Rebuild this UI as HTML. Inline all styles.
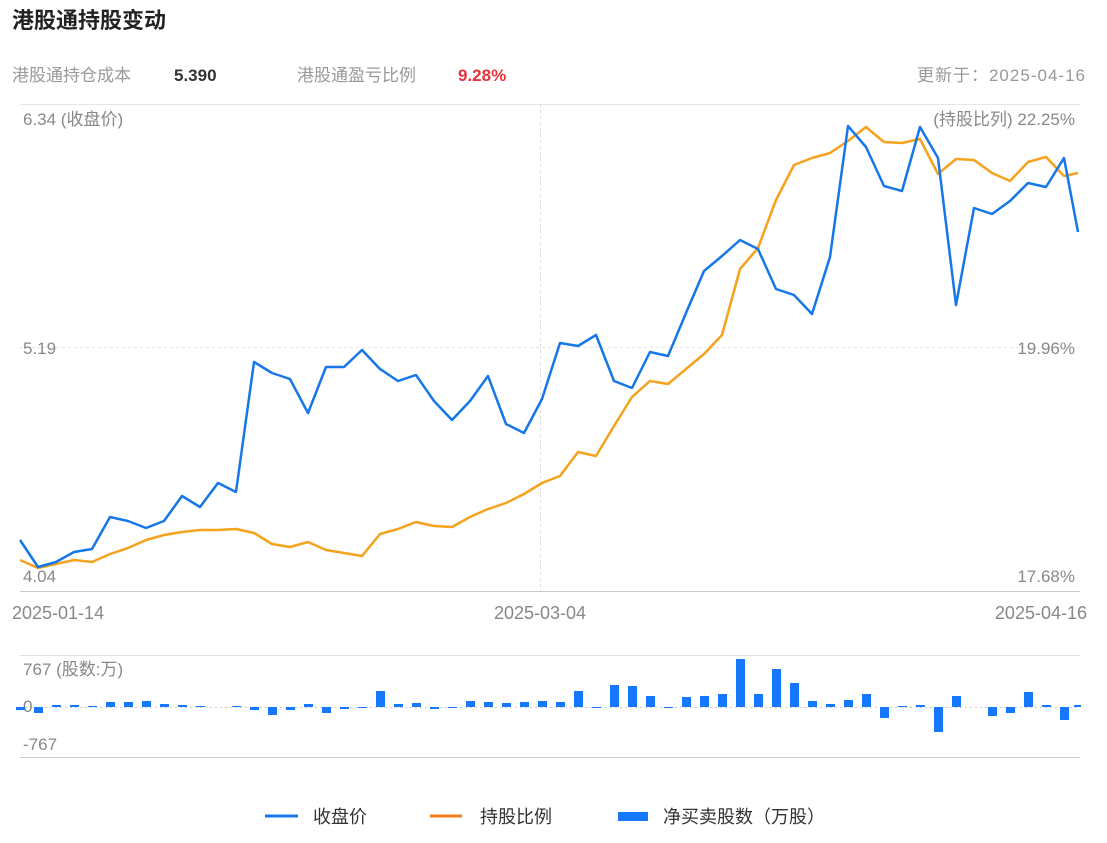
<!DOCTYPE html>
<html><head><meta charset="utf-8"><style>
body{margin:0;background:#fff;width:1107px;height:838px;overflow:hidden;font-family:"Liberation Sans","Noto Sans CJK SC",sans-serif}
svg text{font-family:"Liberation Sans","Noto Sans CJK SC",sans-serif}
</style></head><body>
<svg width="1107" height="838" viewBox="0 0 1107 838" xmlns="http://www.w3.org/2000/svg">
<text x="12" y="28" font-size="22" font-weight="bold" fill="#222">港股通持股变动</text>
<text x="12" y="81" font-size="17" fill="#999">港股通持仓成本</text>
<text x="174" y="81" font-size="17" font-weight="bold" fill="#333">5.390</text>
<text x="297" y="81" font-size="17" fill="#999">港股通盈亏比例</text>
<text x="458" y="81" font-size="17" font-weight="bold" fill="#e8323c">9.28%</text>
<text x="1085" y="81" font-size="17" fill="#999" text-anchor="end" textLength="168">更新于：2025-04-16</text>
<line x1="20" y1="104.5" x2="1080" y2="104.5" stroke="#e6e6e6"/>
<line x1="20" y1="347.5" x2="1080" y2="347.5" stroke="#e6e6e6" stroke-dasharray="3,3"/>
<line x1="540.5" y1="104" x2="540.5" y2="591" stroke="#ddd" stroke-dasharray="3,3"/>
<line x1="20" y1="591.5" x2="1080" y2="591.5" stroke="#ccc"/>
<text x="23" y="125" font-size="17" fill="#888">6.34 (收盘价)</text>
<text x="23" y="354" font-size="17" fill="#888">5.19</text>
<text x="23" y="582" font-size="17" fill="#888">4.04</text>
<text x="1075" y="125" font-size="17" fill="#888" text-anchor="end">(持股比列) 22.25%</text>
<text x="1075" y="354" font-size="17" fill="#888" text-anchor="end">19.96%</text>
<text x="1075" y="582" font-size="17" fill="#888" text-anchor="end">17.68%</text>
<text x="12" y="619" font-size="18" fill="#888">2025-01-14</text>
<text x="540" y="619" font-size="18" fill="#888" text-anchor="middle">2025-03-04</text>
<text x="1087" y="619" font-size="18" fill="#888" text-anchor="end">2025-04-16</text>
<polyline fill="none" stroke="#f5a21c" stroke-width="2.5" stroke-linejoin="round" points="20,560 38,568 56,564 74,560 92,562 110,554 128,548 146,540 164,535 182,532 200,530 218,530 236,529 254,533 272,544 290,547 308,542 326,550 344,553 362,556 380,534 398,529 416,522 434,526 452,527 470,517 488,509 506,503 524,494 542,483 560,476 578,452 596,456 614,426 632,397 650,381 668,384 686,369 704,354 722,335 740,269 758,248 776,200 794,165 812,158 830,153 848,141 866,127 884,142 902,143 920,139 938,174 956,159 974,160 992,173 1010,181 1028,162 1046,157 1064,176 1078,173"/>
<polyline fill="none" stroke="#1677e8" stroke-width="2.5" stroke-linejoin="round" points="20,540 38,567 56,562 74,552 92,549 110,517 128,521 146,528 164,521 182,496 200,507 218,483 236,492 254,362 272,373 290,379 308,413 326,367 344,367 362,350 380,369 398,381 416,375 434,401 452,420 470,401 488,376 506,424 524,433 542,399 560,343 578,346 596,335 614,381 632,388 650,352 668,356 686,313 704,271 722,256 740,240 758,249 776,289 794,295 812,314 830,257 848,126 866,147 884,186 902,191 920,127 938,158 956,305 974,208 992,214 1010,201 1028,183 1046,187 1064,158 1078,232"/>
<line x1="20" y1="655.5" x2="1080" y2="655.5" stroke="#e0e0e0"/>
<line x1="20" y1="707.5" x2="1080" y2="707.5" stroke="#ccc" stroke-dasharray="2,3"/>
<line x1="20" y1="757.5" x2="1080" y2="757.5" stroke="#ccc"/>
<text x="23" y="675" font-size="17" fill="#888">767 (股数:万)</text>
<text x="23" y="712" font-size="17" fill="#888">0</text>
<text x="23" y="750" font-size="17" fill="#888">-767</text>
<g fill="#1677ff">
<rect x="16" y="707" width="9" height="3"/><rect x="34" y="707" width="9" height="6"/><rect x="52" y="705" width="9" height="2"/><rect x="70" y="705" width="9" height="2"/><rect x="88" y="706" width="9" height="1"/><rect x="106" y="702" width="9" height="5"/><rect x="124" y="702" width="9" height="5"/><rect x="142" y="701" width="9" height="6"/><rect x="160" y="704" width="9" height="3"/><rect x="178" y="705" width="9" height="2"/><rect x="196" y="706" width="9" height="1"/><rect x="232" y="706" width="9" height="1"/><rect x="250" y="707" width="9" height="3"/><rect x="268" y="707" width="9" height="8"/><rect x="286" y="707" width="9" height="3"/><rect x="304" y="704" width="9" height="3"/><rect x="322" y="707" width="9" height="6"/><rect x="340" y="707" width="9" height="2"/><rect x="358" y="707" width="9" height="1"/><rect x="376" y="691" width="9" height="16"/><rect x="394" y="704" width="9" height="3"/><rect x="412" y="703" width="9" height="4"/><rect x="430" y="707" width="9" height="2"/><rect x="448" y="707" width="9" height="1"/><rect x="466" y="701" width="9" height="6"/><rect x="484" y="702" width="9" height="5"/><rect x="502" y="703" width="9" height="4"/><rect x="520" y="702" width="9" height="5"/><rect x="538" y="701" width="9" height="6"/><rect x="556" y="702" width="9" height="5"/><rect x="574" y="691" width="9" height="16"/><rect x="592" y="707" width="9" height="1"/><rect x="610" y="685" width="9" height="22"/><rect x="628" y="686" width="9" height="21"/><rect x="646" y="696" width="9" height="11"/><rect x="664" y="707" width="9" height="1"/><rect x="682" y="697" width="9" height="10"/><rect x="700" y="696" width="9" height="11"/><rect x="718" y="694" width="9" height="13"/><rect x="736" y="659" width="9" height="48"/><rect x="754" y="694" width="9" height="13"/><rect x="772" y="669" width="9" height="38"/><rect x="790" y="683" width="9" height="24"/><rect x="808" y="701" width="9" height="6"/><rect x="826" y="704" width="9" height="3"/><rect x="844" y="700" width="9" height="7"/><rect x="862" y="694" width="9" height="13"/><rect x="880" y="707" width="9" height="11"/><rect x="898" y="706" width="9" height="1"/><rect x="916" y="705" width="9" height="2"/><rect x="934" y="707" width="9" height="25"/><rect x="952" y="696" width="9" height="11"/><rect x="988" y="707" width="9" height="9"/><rect x="1006" y="707" width="9" height="6"/><rect x="1024" y="692" width="9" height="15"/><rect x="1042" y="705" width="9" height="2"/><rect x="1060" y="707" width="9" height="13"/><rect x="1074" y="705" width="7" height="2"/>
</g>
<line x1="265" y1="816" x2="298" y2="816" stroke="#1677e8" stroke-width="3"/>
<text x="313" y="823" font-size="18" fill="#333">收盘价</text>
<line x1="430" y1="816" x2="462" y2="816" stroke="#f07c1c" stroke-width="3"/>
<text x="480" y="823" font-size="18" fill="#333">持股比例</text>
<rect x="618" y="812" width="30" height="9" fill="#1677ff"/>
<text x="663" y="823" font-size="18" fill="#333">净买卖股数（万股）</text>
</svg>
</body></html>
